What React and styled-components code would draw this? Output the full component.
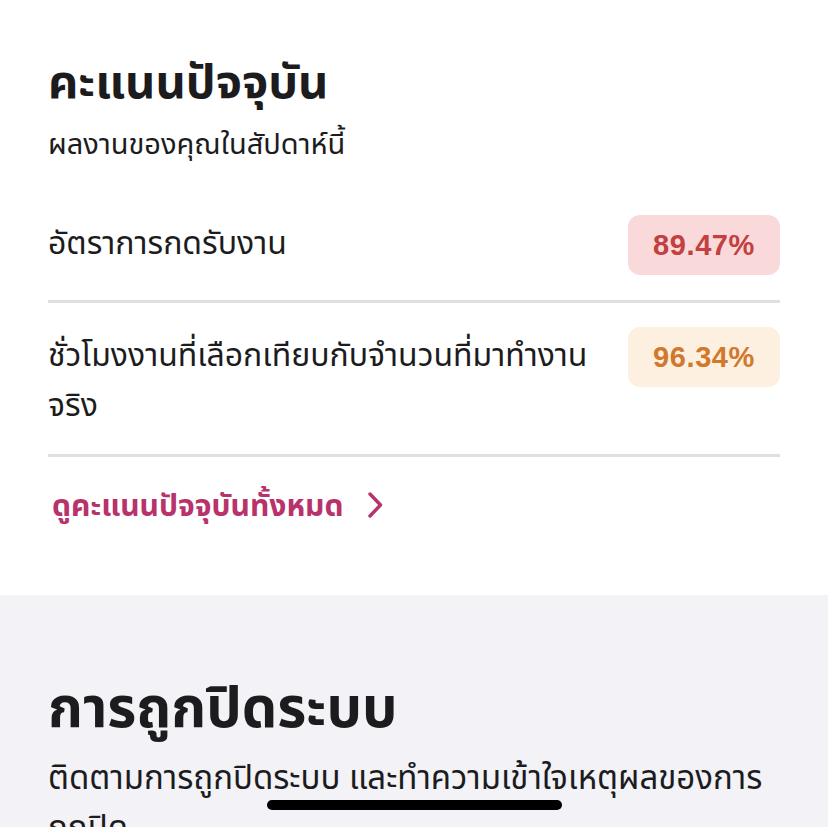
import React from "react";
import styled, { createGlobalStyle } from "styled-components";

const GlobalStyle = createGlobalStyle`
  html, body {
    margin: 0;
    padding: 0;
    background: #ffffff;
  }
  body {
    font-family: "Noto Sans", "Noto Sans Thai", "Liberation Sans", sans-serif;
    color: #1c1c1e;
  }
`;

const Page = styled.div`
  width: 828px;
  height: 827px;
  overflow: hidden;
  position: relative;
`;

const Section = styled.section`
  background: ${(p) => (p.$muted ? "#f2f2f7" : "#ffffff")};
  padding: ${(p) => (p.$muted ? "75px 48px 0" : "50px 48px 65px")};
`;

const Title = styled.h1`
  margin: 0;
  font-size: ${(p) => p.$size || 47}px;
  font-weight: 700;
  line-height: ${(p) => p.$lh || 60}px;
  color: #1c1c1e;
`;

const Subtitle = styled.p`
  margin: ${(p) => p.$mt || 11}px 0 0;
  font-size: ${(p) => p.$size || 29}px;
  line-height: ${(p) => p.$lh || 44}px;
  color: #1c1c1e;
`;

const List = styled.div`
  margin-top: 26px;
  display: flex;
  flex-direction: column;
`;

const Row = styled.div`
  display: flex;
  justify-content: space-between;
  align-items: flex-start;
  gap: 28px;
  padding: 24px 0 25px;
  border-bottom: 3px solid #e0e0e2;
`;

const Label = styled.span`
  flex: 1;
  padding-top: 2px;
  font-size: 32px;
  line-height: 50px;
  color: #1c1c1e;
`;

const Pill = styled.span`
  flex: none;
  width: 152px;
  height: 60px;
  border-radius: 12px;
  display: flex;
  align-items: center;
  justify-content: center;
  font-family: "Liberation Sans", sans-serif;
  font-weight: 700;
  font-size: 29px;
  letter-spacing: 0.6px;
  background: ${(p) => p.$bg};
  color: ${(p) => p.$fg};
`;

const Link = styled.a`
  margin-top: 23px;
  display: inline-flex;
  align-items: center;
  gap: 24px;
  padding-left: 4px;
  font-size: 30px;
  font-weight: 700;
  line-height: 50px;
  color: #b8326b;
  text-decoration: none;
`;

const HomeBar = styled.div`
  position: absolute;
  left: 267px;
  top: 800px;
  width: 295px;
  height: 10px;
  border-radius: 5px;
  background: #000;
`;

const Chevron = () => (
  <svg width="16" height="28" viewBox="0 0 16 28" fill="none">
    <path d="M3 3l10.5 11L3 25" stroke="#b8326b" strokeWidth="3.4" strokeLinecap="round" strokeLinejoin="round" />
  </svg>
);

const scores = [
  { label: "อัตราการกดรับงาน", value: "89.47%", bg: "#f9d9da", fg: "#c2403f" },
  { label: "ชั่วโมงงานที่เลือกเทียบกับจำนวนที่มาทำงานจริง", value: "96.34%", bg: "#fdf0e0", fg: "#d1782c" },
];

export default function App() {
  return (
    <Page>
      <GlobalStyle />
      <Section>
        <Title>คะแนนปัจจุบัน</Title>
        <Subtitle>ผลงานของคุณในสัปดาห์นี้</Subtitle>
        <List>
          {scores.map((s) => (
            <Row key={s.label}>
              <Label>{s.label}</Label>
              <Pill $bg={s.bg} $fg={s.fg}>{s.value}</Pill>
            </Row>
          ))}
        </List>
        <Link href="#">
          ดูคะแนนปัจจุบันทั้งหมด
          <Chevron />
        </Link>
      </Section>
      <Section $muted>
        <Title $size={56} $lh={70}>การถูกปิดระบบ</Title>
        <Subtitle $mt={12} $size={33} $lh={50}>
          ติดตามการถูกปิดระบบ และทำความเข้าใจเหตุผลของการถูกปิด
        </Subtitle>
      </Section>
      <HomeBar />
    </Page>
  );
}
